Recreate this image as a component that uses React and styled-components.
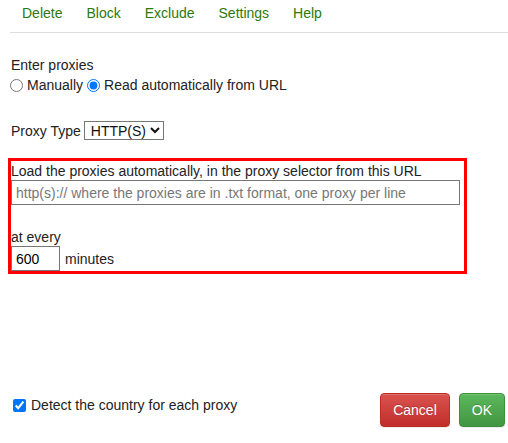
import React, { useState } from 'react';
import styled, { createGlobalStyle } from 'styled-components';

const GlobalStyle = createGlobalStyle`
  html, body {
    margin: 0;
    padding: 0;
    background: #fff;
  }
  body {
    font-family: 'Liberation Sans', Arial, sans-serif;
    font-size: 14px;
    color: #222;
  }
`;

const Page = styled.div`
    min-height: 100vh;
    box-sizing: border-box;
    padding-left: 8px;
    display: flex;
    flex-direction: column;
`;

const Menu = styled.div`
    margin-left: 2px;
    height: 33px;
    display: flex;
    align-items: flex-start;
    gap: 24px;
    padding: 5px 0 0 12px;
    box-sizing: border-box;
    border-bottom: 1px solid #dedede;
`;

const MenuItem = styled.a`
    color: #2b7a0b;
    line-height: 16px;
    cursor: pointer;
    text-decoration: none;
`;

const Section = styled.div`
    padding-left: 3px;
    margin-top: ${(p) => p.$top || 0}px;
`;

const Line = styled.div`
    line-height: 16px;
`;

const Row = styled.div`
    display: flex;
    align-items: center;
    height: 24px;
`;

const Radio = styled.input.attrs({ type: 'radio' })`
    margin: 0 4px 0 ${(p) => p.$left || 0}px;
    width: 13px;
    height: 13px;
`;

const TypeRow = styled.div`
    display: flex;
    align-items: center;
    gap: 3px;
`;

const Select = styled.select`
    font: inherit;
    font-size: 14px;
    width: 80px;
    height: 19px;
    padding: 0 0 0 2px;
    border: 1px solid #767676;
    border-radius: 0;
    background: #fff;
    color: #111;
`;

const UrlBox = styled.div`
    width: 459px;
    height: 116px;
    box-sizing: border-box;
    border: 3px solid #f00;
    margin-top: ${(p) => p.$top}px;
    display: flex;
    flex-direction: column;
    overflow: hidden;
`;

const BoxLabel = styled.div`
    padding-top: 1px;
    line-height: 18px;
`;

const TextInput = styled.input`
    box-sizing: border-box;
    width: 449px;
    height: 25px;
    padding: 0 4px;
    font: inherit;
    font-size: 14px;
    border: 1px solid #767676;
    border-radius: 0;
    outline: none;
    &::placeholder {
        color: #777;
    }
`;

const EveryLabel = styled.div`
    margin-top: 24px;
    line-height: 17px;
`;

const MinutesRow = styled.div`
    display: flex;
    align-items: center;
    gap: 5px;
`;

const NumberInput = styled.input`
    box-sizing: border-box;
    width: 49px;
    height: 25px;
    padding: 0 4px;
    font: inherit;
    font-size: 14px;
    border: 1px solid #767676;
    border-radius: 0;
    outline: none;
`;

const Footer = styled.div`
    margin-top: auto;
    display: flex;
    justify-content: space-between;
    align-items: flex-start;
    padding: 0 3px 16px 3px;
`;

const CheckRow = styled.label`
    display: flex;
    align-items: center;
    gap: 5px;
    margin-top: 4px;
    height: 16px;
`;

const Checkbox = styled.input.attrs({ type: 'checkbox' })`
    margin: 0 0 0 2px;
    width: 13px;
    height: 13px;
`;

const Buttons = styled.div`
    display: flex;
    gap: 9px;
`;

const colors = {
  danger: ['#d9534f', '#c12e2a', '#b92c28'],
  success: ['#5cb85c', '#419641', '#3e8f3e'],
};

const Button = styled.button`
    height: 34px;
    padding: 0 12px;
    font: inherit;
    font-size: 14px;
    color: #fff;
    border-radius: 4px;
    border: 1px solid ${(p) => colors[p.$kind][2]};
    background-image: linear-gradient(to bottom, ${(p) => colors[p.$kind][0]} 0%, ${(p) => colors[p.$kind][1]} 100%);
    text-shadow: 0 -1px 0 rgba(0, 0, 0, 0.2);
    box-shadow: inset 0 1px 0 rgba(255, 255, 255, 0.15), 0 1px 1px rgba(0, 0, 0, 0.075);
    cursor: pointer;
`;

const App = () => {
  const [mode, setMode] = useState('url');
  const [minutes, setMinutes] = useState('600');
  const [detect, setDetect] = useState(true);

  return (
    <>
      <GlobalStyle />
      <Page>
        <Menu>
          <MenuItem>Delete</MenuItem>
          <MenuItem>Block</MenuItem>
          <MenuItem>Exclude</MenuItem>
          <MenuItem>Settings</MenuItem>
          <MenuItem>Help</MenuItem>
        </Menu>

        <Section $top={24}>
          <Line>Enter proxies</Line>
          <Row>
            <Radio name="mode" $left={-1} checked={mode === 'manual'} onChange={() => setMode('manual')} />
            <span>Manually</span>
            <Radio name="mode" $left={4} checked={mode === 'url'} onChange={() => setMode('url')} />
            <span>Read automatically from URL</span>
          </Row>
        </Section>

        <Section $top={24}>
          <TypeRow>
            <span>Proxy Type</span>
            <Select defaultValue="http">
              <option value="http">HTTP(S)</option>
              <option value="socks4">SOCKS4</option>
              <option value="socks5">SOCKS5</option>
            </Select>
          </TypeRow>
        </Section>

        <UrlBox $top={18}>
          <BoxLabel>Load the proxies automatically, in the proxy selector from this URL</BoxLabel>
          <TextInput placeholder="http(s):// where the proxies are in .txt format, one proxy per line" />
          <EveryLabel>at every</EveryLabel>
          <MinutesRow>
            <NumberInput value={minutes} onChange={(e) => setMinutes(e.target.value)} />
            <span>minutes</span>
          </MinutesRow>
        </UrlBox>

        <Footer>
          <CheckRow>
            <Checkbox checked={detect} onChange={(e) => setDetect(e.target.checked)} />
            <span>Detect the country for each proxy</span>
          </CheckRow>
          <Buttons>
            <Button $kind="danger">Cancel</Button>
            <Button $kind="success">OK</Button>
          </Buttons>
        </Footer>
      </Page>
    </>
  );
};

export default App;
